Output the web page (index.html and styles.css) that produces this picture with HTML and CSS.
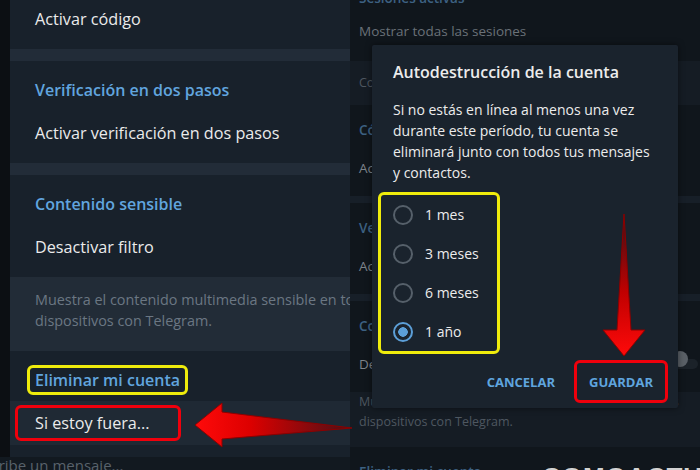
FILE: index.html
```html
<!DOCTYPE html>
<html lang="es">
<head>
  <meta charset="UTF-8" />
  <title>Eliminar mi cuenta - Telegram</title>
  <link rel="stylesheet" href="styles.css">
</head>
<body>

  <div class="screen">

    <!-- Left: settings, highlighted -->
    <div class="left">
      <div class="left-main">
        <div class="edge"></div>
        <div class="panel">
          <div class="sec sec-first">
            <div class="item">Activar código</div>
          </div>
          <div class="stripe"></div>
          <div class="sec">
            <div class="head">Verificación en dos pasos</div>
            <div class="item">Activar verificación en dos pasos</div>
          </div>
          <div class="stripe"></div>
          <div class="sec">
            <div class="head">Contenido sensible</div>
            <div class="item">Desactivar filtro</div>
          </div>
          <div class="desc">Muestra el contenido multimedia sensible en todos tus<br>dispositivos con Telegram.</div>
          <div class="sec sec-last">
            <div class="head"><span class="mark-yellow">Eliminar mi cuenta</span></div>
            <div class="item item-hover"><span class="mark-red">Si estoy fuera...</span></div>
          </div>
        </div>
      </div>
      <div class="chat-input"><span>Escribe un mensaje...</span></div>
    </div>

    <!-- Right: same settings, dimmed, with dialog -->
    <div class="right">
      <div class="r-sec r-first">
        <div class="r-head">Sesiones activas</div>
        <div class="r-item r-muted">Mostrar todas las sesiones</div>
      </div>
      <div class="r-desc">Controla tus sesiones en otros dispositivos.</div>
      <div class="r-sec">
        <div class="r-head">Código de bloqueo local</div>
        <div class="r-item">Activar código</div>
      </div>
      <div class="r-stripe"></div>
      <div class="r-sec">
        <div class="r-head">Verificación en dos pasos</div>
        <div class="r-item">Activar verificación en dos pasos</div>
      </div>
      <div class="r-stripe"></div>
      <div class="r-sec">
        <div class="r-head">Contenido sensible</div>
        <div class="r-item r-toggle-row">
          <span>Desactivar filtro</span>
          <span class="toggle"><span class="knob"></span></span>
        </div>
      </div>
      <div class="r-desc r-desc-2">Muestra el contenido multimedia sensible en todos tus<br>dispositivos con Telegram.</div>
      <div class="r-sec">
        <div class="r-head">Eliminar mi cuenta</div>
      </div>

      <div class="dialog">
        <div class="dialog-title">Autodestrucción de la cuenta</div>
        <p class="dialog-text">Si no estás en línea al menos una vez durante este período, tu cuenta se eliminará junto con todos tus mensajes y contactos.</p>
        <div class="options">
          <div class="option"><span class="radio"></span>1 mes</div>
          <div class="option"><span class="radio"></span>3 meses</div>
          <div class="option"><span class="radio"></span>6 meses</div>
          <div class="option"><span class="radio checked"></span>1 año</div>
        </div>
        <div class="actions">
          <button class="btn">CANCELAR</button>
          <button class="btn btn-marked">GUARDAR</button>
        </div>
      </div>
    </div>

    <!-- annotation arrows -->
    <svg class="arrow-left" width="165" height="54" viewBox="0 0 165 54">
      <defs>
        <linearGradient id="gl" x1="0" y1="0" x2="1" y2="0">
          <stop offset="0" stop-color="#ff0a0a"/>
          <stop offset="0.35" stop-color="#dd0000"/>
          <stop offset="1" stop-color="#4a1016"/>
        </linearGradient>
      </defs>
      <polygon points="5,27 32,5 32,14 162,30 32,41 32,49" fill="url(#gl)" stroke="#8c0000" stroke-width="1"/>
    </svg>

    <svg class="arrow-down" width="52" height="150" viewBox="0 0 52 150">
      <defs>
        <linearGradient id="gd" x1="0" y1="0" x2="0" y2="1">
          <stop offset="0" stop-color="#3a1218"/>
          <stop offset="0.55" stop-color="#c00000"/>
          <stop offset="1" stop-color="#ff0a0a"/>
        </linearGradient>
      </defs>
      <polygon points="26,4 33,120 47,120 26,146 5,120 19,120" fill="url(#gd)" stroke="#8c0000" stroke-width="1"/>
    </svg>

    <div class="watermark">COMOACTUALIZO</div>
  </div>

</body>
</html>
```

FILE: styles.css
```css
body {
  margin: 0;
  background: #0e1319;
  font-family: "Open Sans", "Liberation Sans", sans-serif;
}
.screen {
  position: relative;
  width: 700px;
  height: 470px;
  display: flex;
  overflow: hidden;
}

/* left side */
.left {
  width: 350px;
  display: flex;
  flex-direction: column;
}
.left-main {
  display: flex;
  height: 457px;
}
.edge {
  width: 10px;
  background: #0c0f13;
}
.panel {
  width: 340px;
  background: #18212b;
  overflow: hidden;
}
.sec {
  padding: 18px 0 8px;
}
.sec-first {
  padding: 0 0 11px;
}
.sec-first .item {
  height: 38px;
}
.sec-last {
  padding-bottom: 12px;
}
.head {
  padding-left: 25px;
  line-height: 22px;
  margin-bottom: 10px;
  color: #61a5df;
  font-size: 16px;
  font-weight: 600;
}
.item {
  display: flex;
  align-items: center;
  height: 44px;
  padding-left: 25px;
  color: #ebebeb;
  font-size: 16.2px;
}
.item-hover {
  background: #1f2934;
}
.stripe {
  height: 12px;
  background: #222c38;
}
.desc {
  padding: 12px 0 20px 25px;
  line-height: 21px;
  font-size: 14.4px;
  color: #6b7783;
  white-space: nowrap;
  background: #222c37;
}
.mark-yellow {
  display: inline-block;
  line-height: 22px;
  padding: 1px 5px;
  margin: -4px -8px;
  border: 3px solid #efec0c;
  border-radius: 6px;
}
.mark-red {
  padding: 4px 28px 4px 17px;
  margin-left: -20px;
  line-height: 22px;
  border: 3px solid #f0000c;
  border-radius: 6px;
}
.chat-input {
  flex: 1;
  background: #121920;
  overflow: hidden;
  font-size: 15px;
  line-height: 16px;
  color: #59626b;
  white-space: nowrap;
}
.chat-input span {
  display: block;
  margin: 0 0 0 -24px;
}

/* right side, dimmed */
.right {
  position: relative;
  width: 350px;
  background: #10161c;
  color: #7d838a;
  font-size: 13.5px;
}
.r-sec {
  padding: 14px 9px 17px;
}
.r-first {
  margin-top: -27px;
  padding-bottom: 19px;
}
.r-first .r-head {
  margin-bottom: 11px;
}
.r-head {
  line-height: 22px;
  margin-bottom: 16px;
  color: #3d6182;
  font-weight: 600;
}
.r-item {
  line-height: 22px;
}
.r-muted {
  color: #6a7178;
}
.r-toggle-row {
  display: flex;
  justify-content: space-between;
  align-items: center;
}
.toggle {
  position: relative;
  width: 24px;
  height: 10px;
  margin-right: -7px;
  border-radius: 5px;
  background: #1b2229;
}
.knob {
  position: absolute;
  left: -2px;
  top: -8px;
  width: 16px;
  height: 16px;
  border-radius: 50%;
  background: #5a6067;
}
.r-desc {
  padding: 12px 9px;
  line-height: 20px;
  font-size: 12.5px;
  color: #4e5760;
  background: #151c24;
  white-space: nowrap;
}
.r-desc-2 {
  padding: 0 9px 15px;
}
.r-stripe {
  height: 7px;
  background: #171f28;
}

/* dialog */
.dialog {
  position: absolute;
  left: 22px;
  top: 45px;
  width: 306px;
  height: 363px;
  box-sizing: border-box;
  padding: 16px 10px 4px 21px;
  background: #1a232d;
  border-radius: 2px;
  box-shadow: 0 0 6px rgba(0, 0, 0, 0.5);
  color: #ececec;
}
.dialog-title {
  line-height: 22px;
  font-size: 16px;
  font-weight: 600;
}
.dialog-text {
  margin: 16px 0 0;
  padding-right: 12px;
  line-height: 21px;
  font-size: 14px;
}
.options {
  width: 116px;
  margin: 9px 0 0 -15px;
  border: 3px solid #efec0c;
  border-radius: 6px;
}
.option {
  display: flex;
  align-items: center;
  gap: 12px;
  height: 39px;
  padding-left: 12px;
  font-size: 14px;
}
.radio {
  width: 16px;
  height: 16px;
  border: 2px solid #56606a;
  border-radius: 50%;
  box-sizing: content-box;
}
.radio.checked {
  border-color: #5c9fd8;
  background: radial-gradient(circle, #5c9fd8 0 4.5px, transparent 5px);
}
.actions {
  display: flex;
  justify-content: flex-end;
  gap: 4px;
  margin-top: 6px;
}
.btn {
  height: 43px;
  padding: 0 12px;
  border: 3px solid transparent;
  border-radius: 6px;
  background: none;
  color: #5fa5df;
  font-family: inherit;
  font-size: 13px;
  font-weight: 700;
}
.btn-marked {
  border-color: #f0000c;
}

/* annotations */
.arrow-left {
  position: absolute;
  left: 190px;
  top: 398px;
}
.arrow-down {
  position: absolute;
  left: 598px;
  top: 210px;
}
.watermark {
  position: absolute;
  left: 542px;
  top: 464px;
  font-family: "Liberation Sans", sans-serif;
  font-size: 26px;
  line-height: 26px;
  font-weight: 700;
  letter-spacing: 1px;
  color: #d2d2d2;
  white-space: nowrap;
}
```
